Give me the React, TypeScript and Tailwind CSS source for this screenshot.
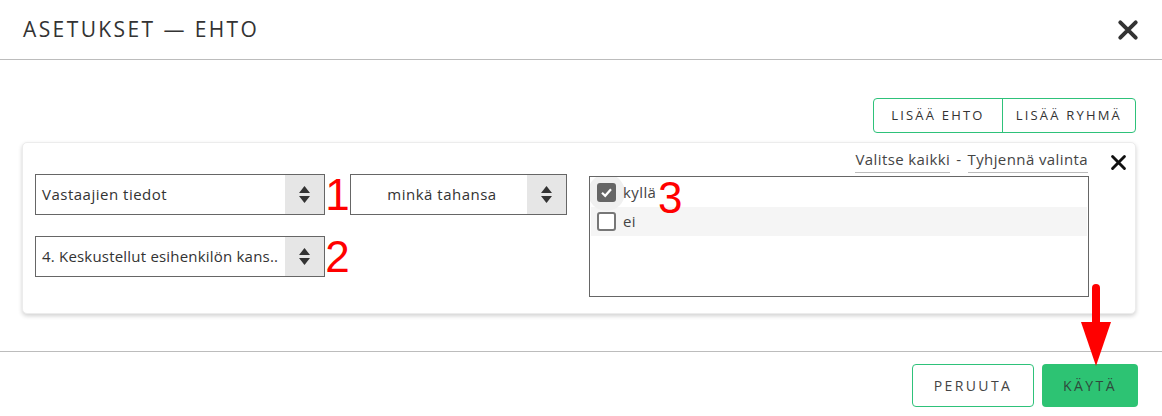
import React from "react"

const font = { fontFamily: '"Open Sans", "Liberation Sans", sans-serif' }

function XIcon({ size, stroke, color }: { size: number; stroke: number; color: string }) {
  return (
    <svg width={size} height={size} viewBox="0 0 20 20">
      <path d="M3 3 L17 17 M17 3 L3 17" stroke={color} strokeWidth={stroke} strokeLinecap="round" />
    </svg>
  )
}

function Spinner() {
  return (
    <div className="flex h-full w-[39px] flex-col items-center justify-center gap-[3px] bg-[#e6e6e6]">
      <svg width="11" height="7" viewBox="0 0 11 7">
        <path d="M5.5 0 L11 7 L0 7 Z" fill="#333" />
      </svg>
      <svg width="11" height="7" viewBox="0 0 11 7">
        <path d="M0 0 L11 0 L5.5 7 Z" fill="#333" />
      </svg>
    </div>
  )
}

function Select({ label, width, center, tight }: { label: string; width: string; center?: boolean; tight?: boolean }) {
  return (
    <div className={`flex h-[41px] ${width} items-stretch border border-[#666] bg-white`}>
      <div
        className={`flex min-w-0 flex-1 items-center whitespace-nowrap pl-[6px] text-[15px] text-[#333] ${
          tight ? "tracking-[0.2px]" : "tracking-[0.5px]"
        } ${center ? "justify-center" : ""}`}
      >
        {label}
      </div>
      <Spinner />
    </div>
  )
}

function Num({ n, cls }: { n: string; cls: string }) {
  return (
    <span
      className={`text-[#ff0000] ${cls}`}
      style={{ fontFamily: '"Liberation Sans", sans-serif', fontSize: "44px", lineHeight: "41px" }}
    >
      {n}
    </span>
  )
}

export default function App() {
  return (
    <div className="relative h-[416px] w-[1162px] bg-white text-[#333]" style={font}>
      <header className="flex h-[60px] items-center justify-between border-b border-[#bcbcbc] pl-[23px] pr-[23px]">
        <h1 className="text-[21px] tracking-[2.4px] text-[#333]">ASETUKSET — EHTO</h1>
        <XIcon size={22} stroke={3.6} color="#333" />
      </header>

      <section className="pl-[22px] pr-[26px] pt-[38px]">
        <div className="flex justify-end">
          <div className="flex h-[35px] rounded-[4px] border border-[#2ec27a] text-[13px] tracking-[2.2px] text-[#333]">
            <button className="px-[17px]">LISÄÄ EHTO</button>
            <button className="border-l border-[#2ec27a] px-[13px]">LISÄÄ RYHMÄ</button>
          </div>
        </div>

        <div className="relative mt-[9px] h-[172px] rounded-[5px] border border-[#ececec] bg-white shadow-[0_2px_4px_rgba(0,0,0,0.18)]">
          <div className="flex h-[31px] items-start justify-end pr-[8px] pt-[5px]">
            <div className="flex items-start text-[15px] tracking-[0.4px] text-[#444]">
              <span className="border-b border-[#bbb] pb-[1px]">Valitse kaikki</span>
              <span className="px-[6px]">-</span>
              <span className="border-b border-[#bbb] pb-[1px]">Tyhjennä valinta</span>
            </div>
            <div className="ml-[22px] mt-[6px]">
              <XIcon size={17} stroke={3.4} color="#111" />
            </div>
          </div>

          <div className="flex pl-[12px]">
            <div className="flex flex-col gap-[21px]">
              <div className="flex h-[41px] items-center">
                <Select label="Vastaajien tiedot" width="w-[290px]" />
                <div className="flex h-[41px] w-[25px] justify-center">
                  <Num n="1" cls="" />
                </div>
                <Select label="minkä tahansa" width="w-[217px]" center />
              </div>
              <div className="flex h-[41px] items-center">
                <Select label="4. Keskustellut esihenkilön kans.." width="w-[290px]" tight />
                <div className="flex h-[41px] w-[25px] justify-center">
                  <Num n="2" cls="" />
                </div>
              </div>
            </div>

            <div className="relative ml-[22px] mt-[2px] h-[121px] w-[500px] border border-[#666] bg-white">
              <div className="h-full w-full overflow-hidden px-[1px] pt-[1px]">
                <div className="relative flex h-[29px] items-center gap-[7px] pl-[6px] text-[15px] tracking-[0.4px]">
                  <div className="absolute left-[-3px] top-[-4px] h-[37px] w-[37px] rounded-full bg-[#f0f0f0]" />
                  <div className="relative flex h-[19px] w-[19px] items-center justify-center rounded-[3px] bg-[#666]">
                    <svg width="13" height="13" viewBox="0 0 13 13">
                      <path d="M2 6.8 L5.2 9.8 L11 3.2" stroke="#fff" strokeWidth="2.2" fill="none" />
                    </svg>
                  </div>
                  <span className="relative text-[#444]">kyllä</span>
                </div>
                <div className="flex h-[29px] items-center gap-[7px] bg-[#f5f5f5] pl-[6px] text-[15px] tracking-[0.4px]">
                  <div className="h-[19px] w-[19px] rounded-[3px] border-2 border-[#777] bg-white" />
                  <span className="text-[#444]">ei</span>
                </div>
              </div>
              <Num n="3" cls="absolute left-[68px] top-[0px]" />
            </div>
          </div>
        </div>
      </section>

      <footer className="mt-[37px] flex justify-end gap-[8px] border-t border-[#bcbcbc] pr-[24px] pt-[12px]">
        <button className="h-[43px] w-[122px] rounded-[4px] border border-[#2ec27a] bg-white text-[14px] tracking-[2.4px] text-[#444]">
          PERUUTA
        </button>
        <button className="h-[43px] w-[96px] rounded-[4px] bg-[#2dc373] text-[14px] tracking-[2.4px] text-[#2f4a3c]">
          KÄYTÄ
        </button>
      </footer>

      <svg className="absolute left-[1080px] top-[284px]" width="32" height="84" viewBox="0 0 32 84">
        <path d="M16 4 L16 40" stroke="#ff0000" strokeWidth="8" strokeLinecap="round" />
        <path d="M1 38 L31 38 L16 82 Z" fill="#ff0000" />
      </svg>
    </div>
  )
}
